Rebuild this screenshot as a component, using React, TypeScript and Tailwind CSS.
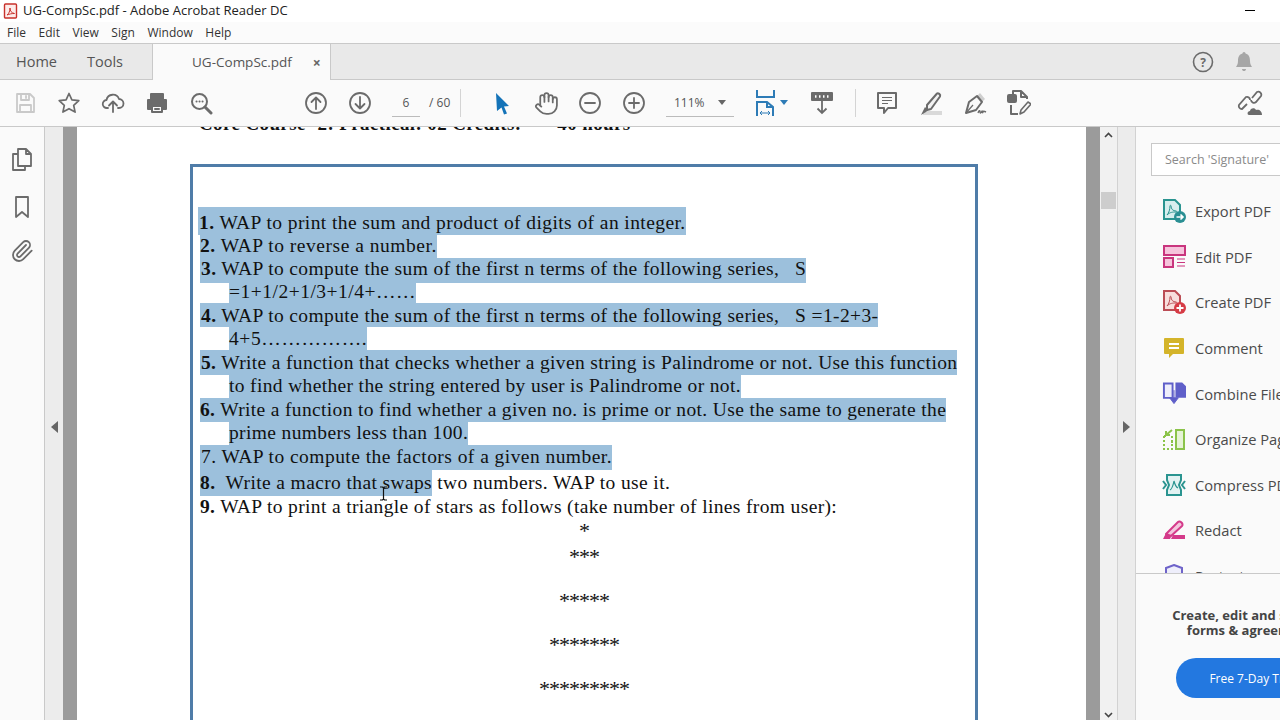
import React from "react";
import { Hand, Paperclip } from "lucide-react";

const ui = "font-['Open_Sans','Noto_Sans',sans-serif]";

// ============= Toolbar icons =============
const Ico = ({ children, className = "" }: { children: React.ReactNode; className?: string }) => (
  <div className={"flex w-11 h-full items-center justify-center shrink-0 " + className}>{children}</div>
);

const S = ({ children, size = 24, color = "#6b6b6b", width = 2 }: { children: React.ReactNode; size?: number; color?: string; width?: number }) => (
  <svg width={size} height={size} viewBox="0 0 24 24" fill="none" stroke={color} strokeWidth={width} strokeLinejoin="round" strokeLinecap="round">
    {children}
  </svg>
);

const AdobeMark = ({ color }: { color: string }) => (
  <path d="M4 16c2-2 3-6 3-9 0-1 1-1 1 0 0 3 2 5 5 5 1 0 1 1 0 1-3 0-6 0-9 3z" fill="none" stroke={color} strokeWidth={1} />
);

const ToolRow = ({ icon, label }: { icon: React.ReactNode; label: string }) => (
  <div className="flex h-[45.6px] items-center pl-[26px] shrink-0">
    <div className="w-[24px] h-[24px] flex items-center justify-center">{icon}</div>
    <span className="ml-[9px] text-[14.7px] text-[#4b4b4b] whitespace-nowrap">{label}</span>
  </div>
);

const Hl = ({ children, className = "" }: { children: React.ReactNode; className?: string }) => (
  <span className={"inline-block h-full bg-[#9cc0dc] " + className}>{children}</span>
);

export default function App() {
  return (
    <div className={"relative flex flex-col w-[1280px] h-[720px] overflow-hidden bg-white " + ui}>
      {/* ============= Title bar ============= */}
      <div className="flex h-[22px] items-center bg-white pl-[3px] relative">
        <svg width="15" height="16" viewBox="0 0 15 16">
          <rect x="1.5" y="1" width="12" height="14" rx="1" fill="#fdecea" stroke="#c8312b" strokeWidth="1.4" />
          <path d="M4 12c2-1.5 3-4 3-7 0 3 1.500 5 4.500 5.500-3 0-5 .5-7.500 1.500z" fill="none" stroke="#c8312b" strokeWidth="1" />
        </svg>
        <span className="ml-[5px] text-[13px] text-[#222]">UG-CompSc.pdf - Adobe Acrobat Reader DC</span>
        <div className="absolute right-[25px] top-[10px] w-[10px] h-[1px] bg-black" />
      </div>
      {/* ============= Menu ============= */}
      <div className="flex h-[22px] items-center gap-[12.6px] pl-[7px] text-[12px] text-[#333] bg-[#fbfbfb] border-b border-[#c9c9c9]">
        <span>File</span><span>Edit</span><span>View</span><span>Sign</span><span>Window</span><span>Help</span>
      </div>
      {/* ============= Tabs ============= */}
      <div className="flex h-[36px] bg-[#e9e9e9] border-b border-[#c9c9c9] shrink-0">
        <div className="flex w-[152px] items-center pl-[16px] gap-[30px] text-[14.5px] text-[#555]">
          <span>Home</span><span>Tools</span>
        </div>
        <div className="flex w-[179px] h-[36px] items-center bg-[#fafafa] border-x border-[#c9c9c9] pl-[39px] text-[13.5px] text-[#555]">
          <span>UG-CompSc.pdf</span>
          <span className="ml-[21px] text-[14px] font-bold text-[#666]">×</span>
        </div>
        <div className="flex ml-auto items-center pr-[27px] gap-[21px]">
          <svg width="22" height="22" viewBox="0 0 22 22" fill="none">
            <circle cx="11" cy="11" r="9.5" stroke="#6b6b6b" strokeWidth="1.6" />
            <text x="11" y="15.5" textAnchor="middle" fontSize="12" fontWeight="700" fill="#6b6b6b">?</text>
          </svg>
          <svg width="18" height="22" viewBox="0 0 18 22"><path d="M9 1c1 0 1.500.8 1.500 1.500C14 3.500 15 6 15 10c0 3 1 4 2 6H1c1-2 2-3 2-6 0-4 1-6.500 4.500-7.500C7.500 1.800 8 1 9 1zM7 18h4c0 1.500-1 2-2 2s-2-.5-2-2z" fill="#a6a6a6" /></svg>
        </div>
      </div>
      {/* ============= Toolbar ============= */}
      <div className="flex h-[47px] items-center bg-[#fafafa] border-b border-[#c9c9c9] pl-[3px] shrink-0">
        <Ico><S color="#c9c9c9" width={1.8}><path d="M4 3h13l4 4v14H4zM8 3v6h8V3M13 5v2M7 21v-7h11v7" /></S></Ico>
        <Ico><S width={1.7}><path d="M12 2.500l2.900 6.300 6.900.8-5.100 4.700 1.400 6.800L12 17.700 5.900 21.100l1.400-6.800L2.200 9.600l6.900-.8z" /></S></Ico>
        <Ico><S width={1.8}><path d="M7 17H6a4 4 0 0 1-.5-8 6.500 6.500 0 0 1 12.500-1 4.500 4.500 0 0 1 0 9h-1M12 21v-10M8 14.500l4-4 4 4" /></S></Ico>
        <Ico><S><path d="M6 8V3h12v5H6z" fill="#6b6b6b" /><path d="M3 9h18v9h-3v-3H6v3H3z" fill="#6b6b6b" /><path d="M7 15h10v6H7zM10 18h4" /></S></Ico>
        <Ico><S><circle cx="10.5" cy="10.5" r="7.5" /><path d="M16 16l6 6" strokeWidth="3" /><path d="M7.500 10.500h.1M10.500 10.500h.1M13.500 10.500h.1" /></S></Ico>
        <div className="w-[71px] shrink-0" />
        <Ico><S width={1.8}><circle cx="12" cy="12" r="10" /><path d="M12 18V6.500M7.500 11L12 6.500l4.500 4.500" /></S></Ico>
        <Ico><S width={1.8}><circle cx="12" cy="12" r="10" /><path d="M12 6v11.500M7.500 13l4.500 4.500 4.500-4.500" /></S></Ico>
        <div className="flex w-[78px] h-full items-center pl-[10px] text-[12px] text-[#555] shrink-0">
          <span className="flex w-[28px] h-[28px] items-center justify-center border-b border-[#bbb]">6</span>
          <span className="ml-[9px]">/ 60</span>
        </div>
        <div className="w-px h-[28px] bg-[#d4d4d4] shrink-0" />
        <div className="w-[19px] shrink-0" />
        <Ico>
          <svg width="16" height="24" viewBox="0 0 16 24"><path d="M2 2l13 13-5 .5 3 7-3 1-2.500-7L3 20z" fill="#1473b8" /></svg>
        </Ico>
        <Ico><Hand size={25} strokeWidth={1.7} color="#6b6b6b" /></Ico>
        <Ico><S width={1.8}><circle cx="12" cy="12" r="10" /><path d="M7 12h10" /></S></Ico>
        <Ico><S width={1.8}><circle cx="12" cy="12" r="10" /><path d="M7 12h10M12 7v10" /></S></Ico>
        <div className="flex w-[68px] h-[28px] ml-[10px] items-center border-b border-[#bbb] pl-[8px] text-[12px] text-[#555] shrink-0">
          111%
          <svg className="ml-[13px]" width="8" height="5" viewBox="0 0 8 5"><path d="M0 0h8L4 5z" fill="#666" /></svg>
        </div>
        <div className="flex w-[34px] h-full ml-[22px] items-center shrink-0">
          <svg width="19" height="28" viewBox="0 0 19 28" fill="none" stroke="#2d7bb6" strokeWidth="2">
            <path d="M1 1v7h17V1" />
            <path d="M1 27V13h10l6 5v9M11 13v5h6" />
            <path d="M4 24h10M4 24l2-2M4 24l2 2M14 24l-2-2M14 24l-2 2" strokeWidth="1" />
          </svg>
          <svg className="ml-[5px] mb-[2px]" width="8" height="5" viewBox="0 0 8 5"><path d="M0 0h8L4 5z" fill="#2d7bb6" /></svg>
        </div>
        <div className="flex w-[44px] h-full ml-[10px] items-center justify-center shrink-0">
          <svg width="24" height="26" viewBox="0 0 24 26" fill="none">
            <rect x="1" y="2" width="22" height="9" rx="1" fill="#6b6b6b" />
            <path d="M5 6.500h1.500M9 6.500h1.500M13 6.500h1.500M17 6.500h1.500" stroke="#fff" strokeWidth="2.500" />
            <path d="M12 11v12M7.500 18.500L12 23l4.500-4.500" stroke="#6b6b6b" strokeWidth="1.8" />
          </svg>
        </div>
        <div className="w-[11px] shrink-0" />
        <div className="w-px h-[28px] bg-[#d4d4d4] shrink-0" />
        <div className="w-[9px] shrink-0" />
        <Ico>
          <svg width="22" height="24" viewBox="0 0 22 24" fill="none" stroke="#6b6b6b" strokeWidth="2" strokeLinejoin="round">
            <path d="M2 2h18v15h-8l-4 5v-5H2z" />
            <path d="M6 6.500h10M6 9.500h10M6 12.500h6" strokeWidth="1.200" />
          </svg>
        </Ico>
        <Ico>
          <svg width="24" height="24" viewBox="0 0 24 24" fill="none">
            <rect x="4" y="20" width="19" height="4" fill="#d9d9d9" />
            <path d="M8 14L18 2.500c1-1 4 1 3 3L12 18l-4 1z" fill="#f2f2f2" stroke="#6b6b6b" strokeWidth="2" strokeLinejoin="round" />
            <path d="M2 24l5-3 2-2-3-3z" fill="#6b6b6b" />
          </svg>
        </Ico>
        <Ico>
          <svg width="25" height="24" viewBox="0 0 25 24" fill="none" stroke="#6b6b6b" strokeWidth="2" strokeLinejoin="round">
            <path d="M14 5l3-3 5 6-3 3z" fill="#cfcfcf" stroke="none" />
            <path d="M3 22l3-11 8-6 5 6-6 8z" />
            <path d="M3 22l7-8" strokeWidth="1.200" />
            <path d="M15 22c1-3 2-3 2-1s1 1 2-1c0 2 1 2 1 1s1-1 3 0" strokeWidth="1.400" />
          </svg>
        </Ico>
        <Ico>
          <svg width="24" height="26" viewBox="0 0 24 26" fill="none" stroke="#6b6b6b" strokeWidth="2" strokeLinejoin="round">
            <rect x="1" y="5" width="8" height="7" rx="1" fill="#6b6b6b" />
            <path d="M6 5V1h8l6 6v2M14 1v6h6" />
            <path d="M4 15v9h7" />
            <path d="M13 24l1-4 7-8 3 2-7 8z" strokeWidth="1.6" />
          </svg>
        </Ico>
        <div className="flex ml-auto w-[60px] justify-center shrink-0">
          <svg width="26" height="26" viewBox="0 0 26 26" fill="none">
            <path d="M10 14l-5 5a3 3 0 0 1-3-4l7-8a3 3 0 0 1 4 3M15 8l5-6a3 3 0 0 1 4 4l-5 6a3 3 0 0 1-5-2" stroke="#6b6b6b" strokeWidth="1.8" />
            <path d="M12 25c-2 0-2-4 1-4 0-3 5-4 6-1 3-1 6 1 6 5z" fill="#6b6b6b" />
          </svg>
        </div>
      </div>

      {/* ============= Main ============= */}
      <div className="flex flex-1 min-h-0">
        {/* ============= Left rail ============= */}
        <div className="flex flex-col w-[45px] items-center border-r border-[#c9c9c9] bg-[#fafafa] pr-[1px] shrink-0">
          <svg className="mt-[21px]" width="22" height="24" viewBox="0 0 22 24" fill="none" stroke="#6b6b6b" strokeWidth="1.8" strokeLinejoin="round">
            <path d="M7 1h8l5 5v12H7zM15 1v5h5" />
            <path d="M7 6H2v16h12v-4" />
          </svg>
          <svg className="mt-[24px]" width="16" height="22" viewBox="0 0 16 22" fill="none" stroke="#6b6b6b" strokeWidth="1.8" strokeLinejoin="round"><path d="M2 1h12v20l-6-5-6 5z" /></svg>
          <Paperclip className="mt-[21px]" size={24} strokeWidth={1.8} color="#6b6b6b" />
        </div>
        <div className="flex w-[18px] items-center justify-center bg-[#ececec] pt-[7px] shrink-0">
          <div className="w-0 h-0 border-y-[6px] border-y-transparent border-r-[7px] border-r-[#666]" />
        </div>
        <div className="w-[14px] bg-[#9b9b9b] shrink-0" />

        {/* ============= Page ============= */}
        <div className="w-[1009px] bg-white overflow-hidden font-['Liberation_Serif',serif] text-[#111] text-[19.5px] shrink-0">
          <div className="mt-[-14px] pl-[122px] h-[51px] font-bold text-[19px] leading-[22px] whitespace-pre tracking-[0.38px]">Core Course- 2: Practical: 02 Credits:       40 hours</div>
          <div className="w-[788px] ml-[113px] h-[600px] border-[3px] border-[#4f7ca8] border-b-0 pt-[40px] whitespace-pre">
            <div className="h-[28px] leading-[32px] pl-[5px]"><Hl className="pl-px tracking-[0.42px]"><b>1.</b> WAP to print the sum and product of digits of an integer.</Hl></div>
            <div className="h-[23px] leading-[22px] pl-[7px]"><Hl className="tracking-[0.53px]"><b>2.</b> WAP to reverse a number.</Hl></div>
            <div className="h-[25px] leading-[21px] pl-[7px]"><Hl className="pl-px tracking-[0.38px]"><b>3.</b> WAP to compute the sum of the first n terms of the following series,   S</Hl></div>
            <div className="h-[20px] leading-[18px] pl-[36px]"><Hl className="tracking-[0.5px]">=1+1/2+1/3+1/4+……</Hl></div>
            <div className="h-[24px] leading-[26px] pl-[7px]"><Hl className="pl-px tracking-[0.38px]"><b>4.</b> WAP to compute the sum of the first n terms of the following series,   S =1-2+3-</Hl></div>
            <div className="h-[23px] leading-[24px] pl-[36px]"><Hl className="tracking-[0.6px]">4+5…………….</Hl></div>
            <div className="h-[25px] leading-[26px] pl-[7px]"><Hl className="pl-px tracking-[0.35px]"><b>5.</b> Write a function that checks whether a given string is Palindrome or not. Use this function</Hl></div>
            <div className="h-[23px] leading-[22px] pl-[36px]"><Hl className="tracking-[0.35px]">to find whether the string entered by user is Palindrome or not.</Hl></div>
            <div className="h-[24px] leading-[24px] pl-[7px]"><Hl className="tracking-[0.35px]"><b>6.</b> Write a function to find whether a given no. is prime or not. Use the same to generate the</Hl></div>
            <div className="h-[23px] leading-[22px] pl-[36px]"><Hl className="tracking-[0.36px]">prime numbers less than 100.</Hl></div>
            <div className="h-[25px] leading-[24px] pl-[7px]"><Hl className="pl-px tracking-[0.45px]">7. WAP to compute the factors of a given number.</Hl></div>
            <div className="h-[26px] leading-[26px] pl-[7px] tracking-[0.38px]"><Hl><b>8.</b>  Write a macro that swaps</Hl> two numbers. WAP to use it.</div>
            <div className="h-[22px] leading-[22px] pl-[7px] tracking-[0.355px]"><b>9.</b> WAP to print a triangle of stars as follows (take number of lines from user):</div>
            <div className="mt-[2px] h-[22px] leading-[22px] text-center text-[22px] tracking-[-1px]">*</div>
            <div className="mt-[4px] h-[22px] leading-[22px] text-center text-[22px] tracking-[-1px]">***</div>
            <div className="mt-[22px] h-[22px] leading-[22px] text-center text-[22px] tracking-[-1px]">*****</div>
            <div className="mt-[22px] h-[22px] leading-[22px] text-center text-[22px] tracking-[-1px]">*******</div>
            <div className="mt-[22px] h-[22px] leading-[22px] text-center text-[22px] tracking-[-1px]">*********</div>
          </div>
        </div>

        {/* ============= Scrollbar ============= */}
        <div className="w-[14px] bg-[#9b9b9b] shrink-0" />
        <div className="flex flex-col w-[17px] items-center bg-[#f1f1f1] shrink-0">
          <svg className="mt-[5px]" width="9" height="6" viewBox="0 0 9 6" fill="none" stroke="#444" strokeWidth="1.6"><path d="M1 5l3.500-3.500L8 5" /></svg>
          <div className="w-[15px] h-[17px] mt-[54px] bg-[#cdcdcd]" />
          <svg className="mt-auto mb-[2px]" width="9" height="6" viewBox="0 0 9 6" fill="none" stroke="#444" strokeWidth="1.6"><path d="M1 1l3.500 3.500L8 1" /></svg>
        </div>
        <div className="flex w-[19px] items-center justify-center bg-[#ececec] border-x border-[#d2d2d2] pt-[7px] shrink-0">
          <div className="w-0 h-0 border-y-[6px] border-y-transparent border-l-[7px] border-l-[#666]" />
        </div>

        {/* ============= Right panel ============= */}
        <div className="flex flex-col w-[234px] bg-[#fafafa] shrink-0">
          <div className="flex flex-col h-[447px] border-b border-[#c9c9c9] overflow-hidden shrink-0">
            <div className="flex h-[33px] mt-[16px] ml-[15px] mr-[10px] items-center bg-white border border-[#c9c9c9] pl-[13px] pt-px text-[12.5px] text-[#8a8a8a] shrink-0">Search 'Signature'</div>
            <div className="mt-[12.5px] flex flex-col">
              <ToolRow label="Export PDF" icon={
                <svg width="23" height="24" viewBox="0 0 23 24" fill="none">
                  <path d="M1 1h11l5 5v14H1z" fill="#d8eeee" stroke="#2a9490" strokeWidth="2" />
                  <AdobeMark color="#2a9490" />
                  <circle cx="17" cy="18" r="6" fill="#2a8f93" />
                  <path d="M13.500 18h6M17.500 15.500l2.500 2.500-2.500 2.500" stroke="#fff" strokeWidth="1.6" />
                </svg>} />
              <ToolRow label="Edit PDF" icon={
                <svg width="23" height="23" viewBox="0 0 23 23" fill="none" stroke="#c9357e" strokeWidth="2">
                  <rect x="1" y="1" width="21" height="9" fill="#f6c4dc" />
                  <rect x="1" y="13" width="9" height="9" fill="#f6c4dc" />
                  <path d="M14 14h8M14 17.500h8M14 21h8" strokeWidth="1" />
                </svg>} />
              <ToolRow label="Create PDF" icon={
                <svg width="23" height="24" viewBox="0 0 23 24" fill="none">
                  <path d="M1 1h11l5 5v14H1z" fill="#f8dedd" stroke="#bb4d55" strokeWidth="2" />
                  <AdobeMark color="#bb4d55" />
                  <circle cx="17" cy="18" r="6" fill="#d63b45" />
                  <path d="M13.500 18h7M17 14.500v7" stroke="#fff" strokeWidth="1.8" />
                </svg>} />
              <ToolRow label="Comment" icon={
                <svg width="22" height="22" viewBox="0 0 22 22"><path d="M2 1h18a1 1 0 0 1 1 1v14a1 1 0 0 1-1 1H10l-4 4v-4H2a1 1 0 0 1-1-1V2a1 1 0 0 1 1-1z" fill="#d4b42a" /><path d="M6 7h10M6 11h10" stroke="#fff" strokeWidth="2" /></svg>} />
              <ToolRow label="Combine Files" icon={
                <svg width="25" height="24" viewBox="0 0 25 24" fill="none">
                  <path d="M2 1h9v15H2z" fill="#eeeefb" stroke="#5f5fc9" strokeWidth="2" />
                  <path d="M14 0h7l4 4v12H14z" fill="#5f5fc9" />
                  <path d="M12.500 8v11M8 16h9l-4.500 6z" fill="#5f5fc9" stroke="#5f5fc9" strokeWidth="1" />
                </svg>} />
              <ToolRow label="Organize Pages" icon={
                <svg width="22" height="21" viewBox="0 0 22 21" fill="none" stroke="#8bc34a" strokeWidth="2">
                  <rect x="13" y="1" width="8" height="19" fill="#e6f3d6" />
                  <path d="M1 7v13h8V7M1 7h3M9 12v3" strokeDasharray="2 2" />
                  <path d="M9 1L3 6M3 2v4h4" />
                </svg>} />
              <ToolRow label="Compress PDF" icon={
                <svg width="24" height="22" viewBox="0 0 24 22" fill="none" stroke="#2a9490" strokeWidth="2">
                  <path d="M5 1h14v5l-2 5 2 5v5H5v-5l2-5-2-5z" fill="#e2f2f2" />
                  <path d="M1 7l3 4-3 4M23 7l-3 4 3 4" />
                  <path d="M8 16c2-1 3-4 4-9 1 4 2 6 4 7" strokeWidth="1.2" />
                </svg>} />
              <ToolRow label="Redact" icon={
                <svg width="23" height="20" viewBox="0 0 23 20" fill="none">
                  <path d="M3 14L15 2c2-2 6 2 4 4L8 16z" fill="#f4c6dd" stroke="#d43a8a" strokeWidth="2" strokeLinejoin="round" />
                  <path d="M0 19l3-6 5 4-1 2zM10 15h12v4H8z" fill="#d43a8a" />
                </svg>} />
              <ToolRow label="Protect" icon={
                <svg width="20" height="24" viewBox="0 0 20 24" fill="none"><path d="M10 1l8 3v8c0 5-4 8-8 10-4-2-8-5-8-10V4z" fill="#eeeefb" stroke="#6e63c9" strokeWidth="2" /></svg>} />
            </div>
          </div>
          <div className="flex flex-col items-center pt-[34px] text-[13px] font-bold leading-[15px] text-[#444]">
            <div>Create, edit and sign PDF</div>
            <div>forms &amp; agreements</div>
            <div className="flex w-[154px] h-[40px] mt-[20px] items-center justify-center rounded-full bg-[#2378e0] text-[12px] font-normal text-white whitespace-nowrap">Free 7-Day Trial</div>
          </div>
        </div>
      </div>

      {/* ============= I-beam cursor over the text ============= */}
      <svg className="absolute left-[379px] top-[486px]" width="9" height="15" viewBox="0 0 9 15" fill="none" stroke="#111" strokeWidth="1.2">
        <path d="M1 1h2.500l1 1 1-1H8M4.500 2v11M1 14h2.500l1-1 1 1H8" />
      </svg>
    </div>
  );
}
